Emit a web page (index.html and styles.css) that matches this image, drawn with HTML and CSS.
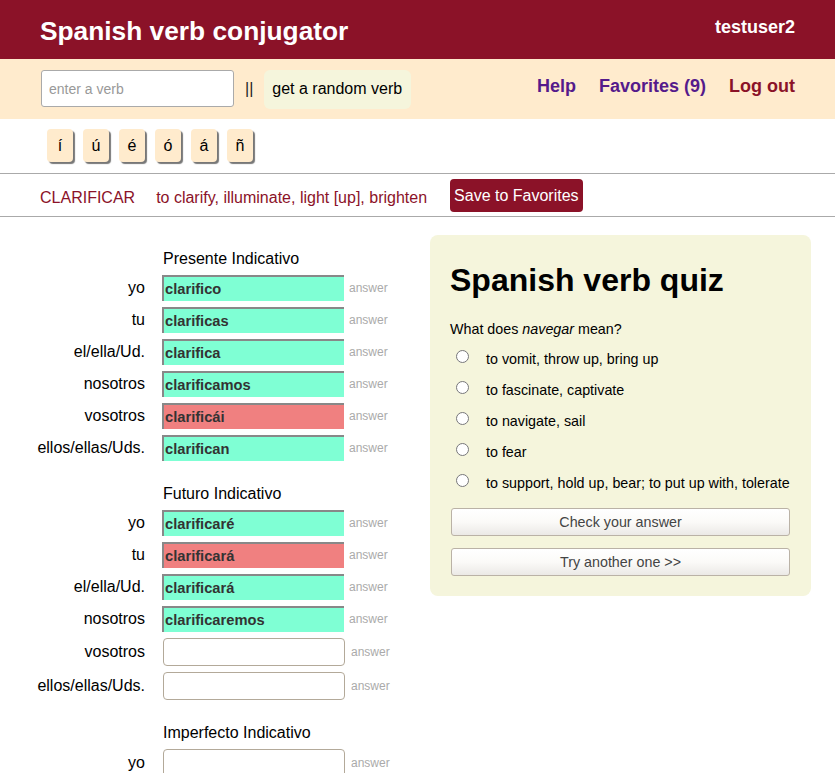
FILE: index.html
```html
<!DOCTYPE html>
<html lang="en">
<head>
<meta charset="utf-8">
<title>Spanish verb conjugator</title>
<link rel="stylesheet" href="styles.css">
</head>
<body>
<header class="topbar">
  <h1 class="brand">Spanish verb conjugator</h1>
  <span class="user">testuser2</span>
</header>
<nav class="navbar">
  <input class="verb-input" type="text" placeholder="enter a verb">
  <span class="sep">||</span>
  <span class="random">get a random verb</span>
  <div class="links">
    <a class="link visited">Help</a>
    <a class="link visited">Favorites (9)</a>
    <a class="link logout">Log out</a>
  </div>
</nav>
<div class="accents">
  <span class="key">í</span><span class="key">ú</span><span class="key">é</span><span class="key">ó</span><span class="key">á</span><span class="key">ñ</span>
</div>
<div class="verbrow">
  <span class="verb">CLARIFICAR</span>
  <span class="meaning">to clarify, illuminate, light [up], brighten</span>
  <span class="save">Save to Favorites</span>
</div>
<main class="main">
  <section class="conj">
    <div class="tense">
      <div class="tense-title">Presente Indicativo</div>
      <div class="row"><span class="pron">yo</span><span class="field ok">clarifico</span><span class="ans">answer</span></div>
      <div class="row"><span class="pron">tu</span><span class="field ok">clarificas</span><span class="ans">answer</span></div>
      <div class="row"><span class="pron">el/ella/Ud.</span><span class="field ok">clarifica</span><span class="ans">answer</span></div>
      <div class="row"><span class="pron">nosotros</span><span class="field ok">clarificamos</span><span class="ans">answer</span></div>
      <div class="row"><span class="pron">vosotros</span><span class="field bad">clarificái</span><span class="ans">answer</span></div>
      <div class="row"><span class="pron">ellos/ellas/Uds.</span><span class="field ok">clarifican</span><span class="ans">answer</span></div>
    </div>
    <div class="tense">
      <div class="tense-title">Futuro Indicativo</div>
      <div class="row"><span class="pron">yo</span><span class="field ok">clarificaré</span><span class="ans">answer</span></div>
      <div class="row"><span class="pron">tu</span><span class="field bad">clarificará</span><span class="ans">answer</span></div>
      <div class="row"><span class="pron">el/ella/Ud.</span><span class="field ok">clarificará</span><span class="ans">answer</span></div>
      <div class="row"><span class="pron">nosotros</span><span class="field ok">clarificaremos</span><span class="ans">answer</span></div>
      <div class="row row-empty"><span class="pron">vosotros</span><input class="field empty" type="text"><span class="ans">answer</span></div>
      <div class="row row-empty"><span class="pron">ellos/ellas/Uds.</span><input class="field empty" type="text"><span class="ans">answer</span></div>
    </div>
    <div class="tense">
      <div class="tense-title">Imperfecto Indicativo</div>
      <div class="row row-empty"><span class="pron">yo</span><input class="field empty" type="text"><span class="ans">answer</span></div>
    </div>
  </section>
  <aside class="quiz">
    <h2 class="quiz-title">Spanish verb quiz</h2>
    <p class="question">What does <em>navegar</em> mean?</p>
    <ul class="options">
      <li class="option"><input type="radio" name="q" class="radio"><span>to vomit, throw up, bring up</span></li>
      <li class="option"><input type="radio" name="q" class="radio"><span>to fascinate, captivate</span></li>
      <li class="option"><input type="radio" name="q" class="radio"><span>to navigate, sail</span></li>
      <li class="option"><input type="radio" name="q" class="radio"><span>to fear</span></li>
      <li class="option"><input type="radio" name="q" class="radio"><span>to support, hold up, bear; to put up with, tolerate</span></li>
    </ul>
    <button class="qbtn first">Check your answer</button>
    <button class="qbtn">Try another one &gt;&gt;</button>
  </aside>
</main>
</body>
</html>
```
FILE: styles.css
```css
* { box-sizing: border-box; }
html, body { margin: 0; padding: 0; }
body {
  font-family: "Liberation Sans", Arial, sans-serif;
  color: #000;
  background: #fff;
  width: 835px;
  overflow: hidden;
}

.topbar {
  background: #8b1228;
  height: 59px;
  display: flex;
  justify-content: space-between;
  align-items: flex-start;
  padding: 0 40px;
}
.brand {
  margin: 0;
  padding-top: 16px;
  font-size: 26.3px;
  line-height: 30px;
  font-weight: bold;
  color: #fff;
}
.user {
  padding-top: 17px;
  font-size: 18px;
  line-height: 20px;
  font-weight: bold;
  color: #fff;
}

.navbar {
  background: #ffebcd;
  height: 60px;
  display: flex;
  align-items: center;
  padding: 0 40px 0 41px;
}
.verb-input {
  width: 193px;
  height: 37px;
  margin-top: -1px;
  border: 1px solid #aaa;
  border-radius: 3px;
  padding: 0 7px;
  font-family: inherit;
  font-size: 14px;
  background: #fff;
}
.verb-input::placeholder { color: #999; }
.sep {
  margin-left: 11px;
  color: #222;
  font-size: 16px;
}
.random {
  margin-left: 11px;
  background: #f5f5dc;
  border-radius: 6px;
  height: 39px;
  display: flex;
  align-items: center;
  padding: 0 9px 0 8px;
  font-size: 16px;
  color: #000;
}
.links {
  margin-left: auto;
  display: flex;
  gap: 23px;
  padding-bottom: 6px;
}
.link {
  font-size: 18px;
  font-weight: bold;
  text-decoration: none;
}
.visited { color: #551a8b; }
.logout { color: #8b1228; }

.accents {
  height: 55px;
  display: flex;
  gap: 10px;
  padding: 10px 0 0 47px;
  border-bottom: 1px solid #aaa;
}
.key {
  width: 26px;
  height: 33px;
  background: #ffebcd;
  border-radius: 4px;
  box-shadow: 2px 2px 1px #777;
  display: flex;
  align-items: center;
  justify-content: center;
  font-size: 16px;
}

.verbrow {
  height: 43px;
  display: flex;
  align-items: flex-start;
  padding-left: 40px;
  border-bottom: 1px solid #aaa;
  color: #8b1228;
  font-size: 16px;
  line-height: 20px;
}
.verb, .meaning { padding-top: 14px; }
.meaning { margin-left: 21px; }
.save {
  margin-left: 23px;
  margin-top: 5px;
  background: #8b1228;
  color: #fff;
  height: 33px;
  padding: 0 4px;
  border-radius: 4px;
  display: flex;
  align-items: center;
}

.main {
  display: flex;
  align-items: flex-start;
  margin-top: 18px;
}
.conj {
  width: 430px;
  padding-top: 14px;
}
.tense + .tense { margin-top: 20px; }
.tense-title {
  margin-left: 163px;
  font-size: 16px;
  line-height: 20px;
  margin-bottom: 3px;
}
.row {
  display: flex;
  align-items: center;
  height: 32px;
}
.row-empty { height: 34px; }
.pron {
  width: 145px;
  text-align: right;
  font-size: 16px;
}
.field {
  margin-left: 17px;
  width: 182px;
  height: 26px;
  display: flex;
  align-items: center;
  padding-left: 1px;
  font-size: 14.7px;
  font-weight: bold;
  color: #333;
  border-top: 2px solid #888;
  border-left: 2px solid #888;
}
.ok { background: #7fffd4; }
.bad { background: #f08080; }
.field.empty {
  margin-left: 18px;
  height: 28px;
  background: #fff;
  border: 1px solid #b3a999;
  border-radius: 4px;
  font-family: inherit;
}
.ans {
  margin-left: 5px;
  font-size: 12px;
  color: #aaa;
}
.row-empty .ans { margin-left: 6px; }

.quiz {
  width: 381px;
  background: #f5f5dc;
  border-radius: 8px;
  padding: 26px 21px 20px 20px;
}
.quiz-title {
  margin: 0;
  font-size: 32px;
  line-height: 38px;
  font-weight: bold;
}
.question {
  margin: 22px 0 0;
  font-size: 14.3px;
  line-height: 16px;
}
.options {
  list-style: none;
  margin: 6px 0 0;
  padding: 0;
}
.option {
  height: 31px;
  display: flex;
  align-items: center;
  font-size: 14.3px;
}
.radio {
  margin: 0 0 0 6px;
  width: 13px;
  height: 13px;
  position: relative;
  top: -2px;
}
.option span { margin-left: 17px; }
.qbtn {
  display: block;
  width: 339px;
  height: 28px;
  margin: 10px 0 0 1px;
  border: 1px solid #bab2a6;
  border-radius: 3px;
  background: linear-gradient(#ffffff, #fbfaf8 50%, #ebe9e6);
  font-family: inherit;
  font-size: 14.3px;
  color: #444;
}
.qbtn + .qbtn { margin-top: 12px; }
```
